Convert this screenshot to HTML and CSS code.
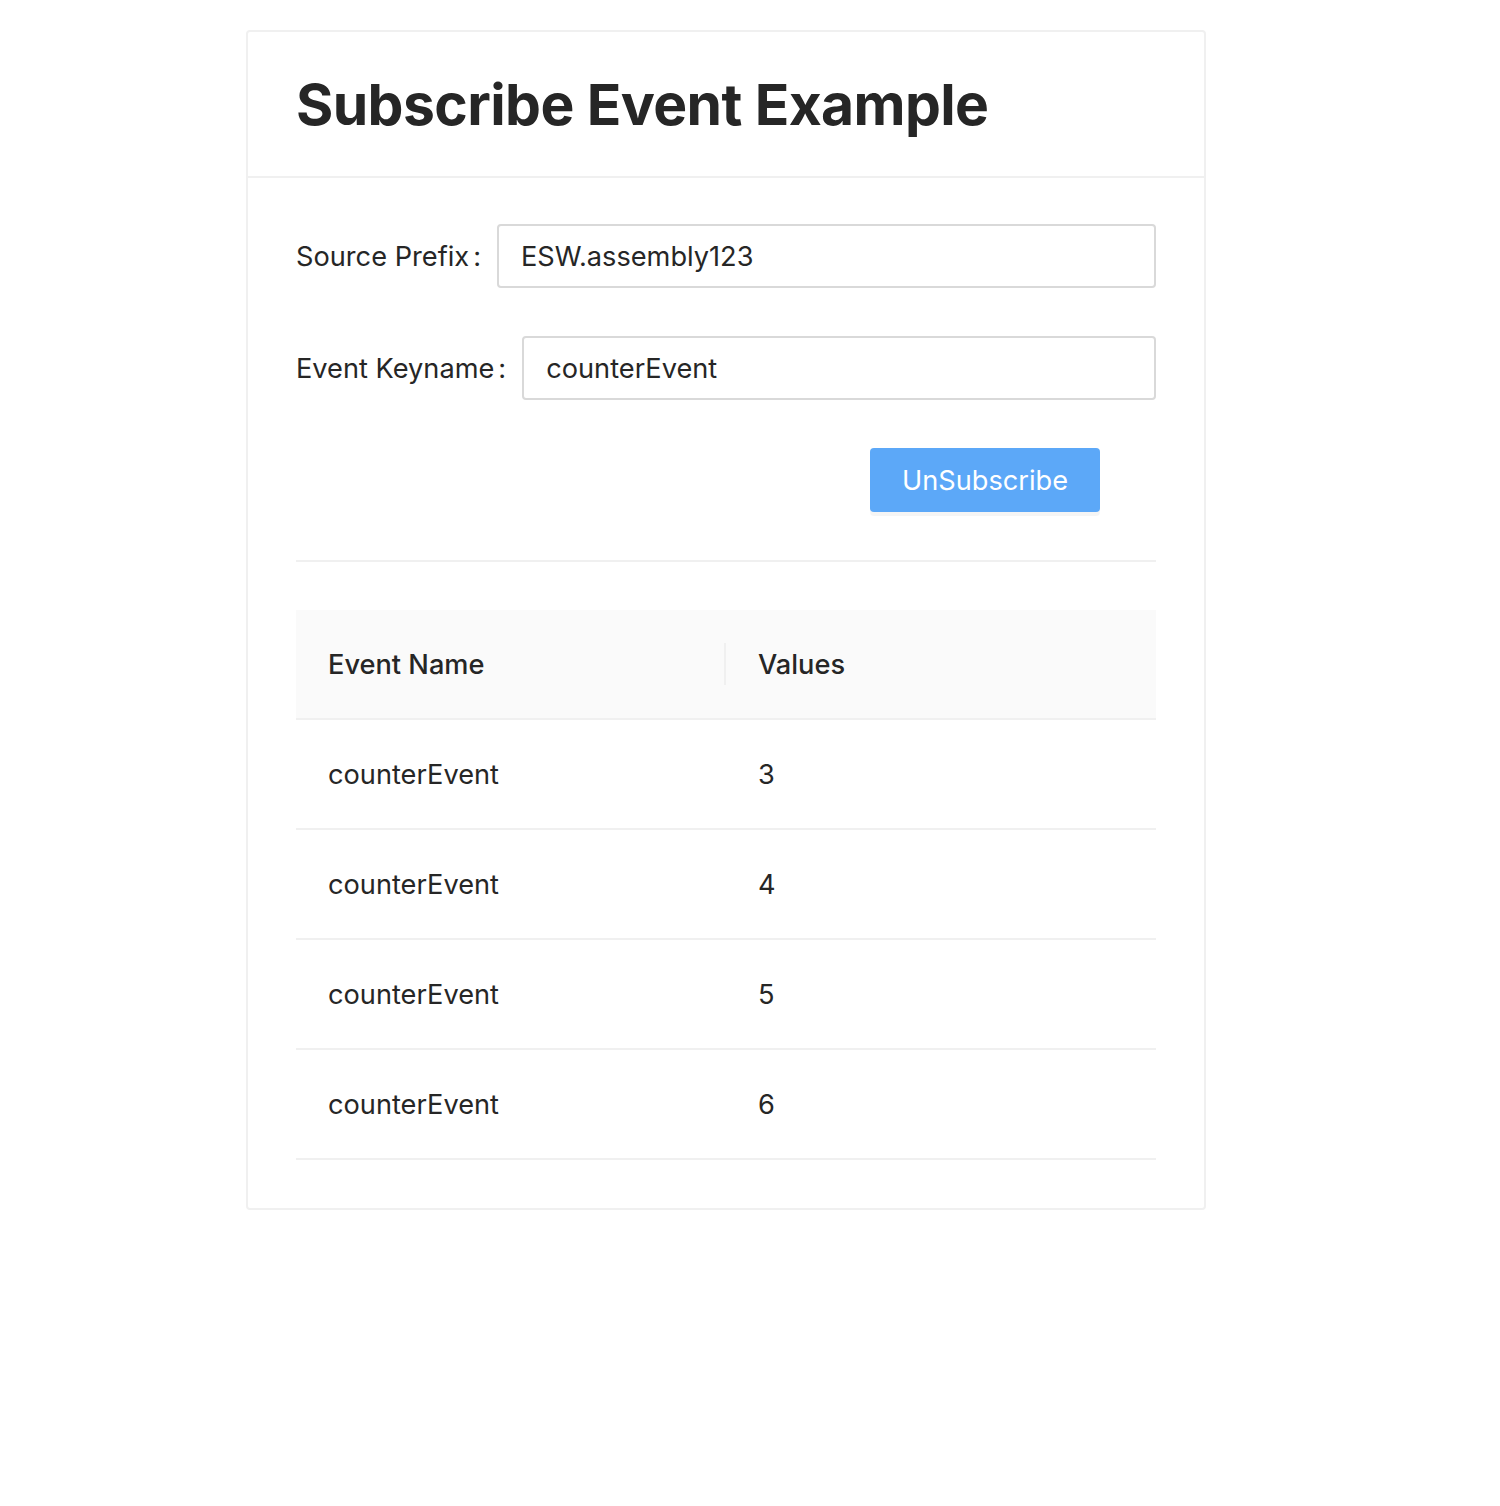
FILE: index.html
```html
<!DOCTYPE html>
<html>
<head>
<meta charset="utf-8">
<link rel="stylesheet" href="styles.css">
</head>
<body>
<div class="page">
  <div class="card">
    <div class="card-head"><h1 class="title">Subscribe Event Example</h1></div>
    <div class="card-body">
      <div class="form-item">
        <label class="label">Source Prefix<span class="colon">:</span></label>
        <div class="input">ESW.assembly123</div>
      </div>
      <div class="form-item">
        <label class="label">Event Keyname<span class="colon">:</span></label>
        <div class="input">counterEvent</div>
      </div>
      <div class="form-actions">
        <button class="btn">UnSubscribe</button>
      </div>
      <div class="divider"></div>
      <table class="table">
        <thead>
          <tr><th class="c1">Event Name</th><th class="c2">Values</th></tr>
        </thead>
        <tbody>
          <tr><td>counterEvent</td><td>3</td></tr>
          <tr><td>counterEvent</td><td>4</td></tr>
          <tr><td>counterEvent</td><td>5</td></tr>
          <tr><td>counterEvent</td><td>6</td></tr>
        </tbody>
      </table>
    </div>
  </div>
</div>
</body>
</html>
```
FILE: styles.css
```css
html, body { margin: 0; padding: 0; background: #fff; }
body { font-family: Inter, "Noto Sans", sans-serif; color: #262626; }
.page { padding: 30px 0 0 246px; }
.card {
  width: 956px;
  border: 2px solid #f0f0f0;
  border-radius: 4px;
  background: #fff;
}
.card-head {
  height: 144px;
  border-bottom: 2px solid #f0f0f0;
  padding: 0 48px;
  display: flex;
  align-items: center;
}
.title {
  margin: 0;
  font-size: 57px;
  font-weight: 700;
  letter-spacing: -0.6px;
  color: #262626;
  line-height: 1;
}
.card-body { padding: 46px 48px 48px; }
.form-item {
  display: flex;
  align-items: center;
  margin-bottom: 48px;
}
.label { font-size: 27.2px; white-space: nowrap; }
.colon { margin: 0 16px 0 4px; }
.input {
  flex: 1;
  height: 60px;
  border: 2px solid #d9d9d9;
  border-radius: 4px;
  padding: 0 22px;
  display: flex;
  align-items: center;
  font-size: 27.2px;
}
.form-actions { padding-left: 574px; }
.btn {
  width: 230px;
  height: 64px;
  border: none;
  border-radius: 4px;
  background: #5ca8f8;
  color: #fff;
  font-family: Inter, "Noto Sans", sans-serif;
  font-size: 27.2px;
  box-shadow: 0 4px 0 rgba(0,0,0,0.04);
  padding: 0;
}
.divider { height: 2px; background: #f0f0f0; margin: 48px 0; }
.table { width: 100%; border-collapse: collapse; font-size: 27.2px; }
.table th {
  background: #fafafa;
  height: 108px;
  text-align: left;
  font-weight: 500;
  padding: 0 32px;
  border-bottom: 2px solid #f0f0f0;
  position: relative;
}
.table th.c1 { width: 366px; }
.table th.c1::after {
  content: "";
  position: absolute;
  right: 0;
  top: 33px;
  width: 2px;
  height: 42px;
  background: #f0f0f0;
}
.table td {
  height: 108px;
  padding: 0 32px;
  border-bottom: 2px solid #f0f0f0;
}
```
